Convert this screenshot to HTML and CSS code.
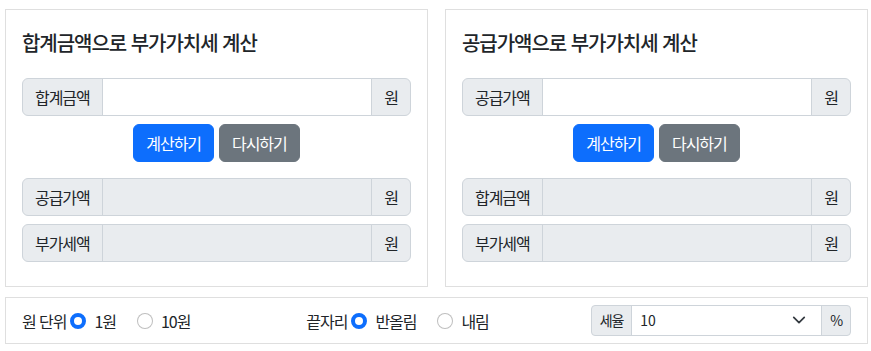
FILE: index.html
```html
<!DOCTYPE html>
<html lang="ko">
<head>
	<meta charset="UTF-8">
	<title>부가가치세 계산기</title>
	<link rel="stylesheet" href="styles.css">
</head>
<body>
	<div class="wrap">
		<div class="cards">
			<div class="card">
				<h5 class="title">합계금액으로 부가가치세 계산</h5>
				<div class="igroup">
					<span class="addon">합계금액</span>
					<input class="field" type="text">
					<span class="addon">원</span>
				</div>
				<div class="btns">
					<button class="btn primary">계산하기</button>
					<button class="btn secondary">다시하기</button>
				</div>
				<div class="igroup">
					<span class="addon">공급가액</span>
					<input class="field" type="text" disabled>
					<span class="addon">원</span>
				</div>
				<div class="igroup">
					<span class="addon">부가세액</span>
					<input class="field" type="text" disabled>
					<span class="addon">원</span>
				</div>
			</div>

			<div class="card">
				<h5 class="title">공급가액으로 부가가치세 계산</h5>
				<div class="igroup">
					<span class="addon">공급가액</span>
					<input class="field" type="text">
					<span class="addon">원</span>
				</div>
				<div class="btns">
					<button class="btn primary">계산하기</button>
					<button class="btn secondary">다시하기</button>
				</div>
				<div class="igroup">
					<span class="addon">합계금액</span>
					<input class="field" type="text" disabled>
					<span class="addon">원</span>
				</div>
				<div class="igroup">
					<span class="addon">부가세액</span>
					<input class="field" type="text" disabled>
					<span class="addon">원</span>
				</div>
			</div>
		</div>

		<div class="card options">
			<div class="opt">
				<span class="opt-name">원 단위</span>
				<label class="check"><input type="radio" name="unit" checked> 1원</label>
				<label class="check"><input type="radio" name="unit"> 10원</label>
			</div>
			<div class="opt">
				<span class="opt-name">끝자리</span>
				<label class="check"><input type="radio" name="round" checked> 반올림</label>
				<label class="check"><input type="radio" name="round"> 내림</label>
			</div>
			<div class="opt">
				<div class="igroup sm">
					<span class="addon">세율</span>
					<div class="sel">
						<select>
							<option>10</option>
							<option>0</option>
						</select>
						<svg class="chev" width="16" height="16" viewBox="0 0 16 16"><path d="M2 5l6 6 6-6" fill="none" stroke="#343a40" stroke-width="2" stroke-linecap="round" stroke-linejoin="round"/></svg>
					</div>
					<span class="addon">%</span>
				</div>
			</div>
		</div>
	</div>
</body>
</html>
```

FILE: styles.css
```css
* {
	box-sizing: border-box;
}
body {
	margin: 0;
	font-family: "Noto Sans CJK KR", "Noto Sans", sans-serif;
	font-size: 16px;
	line-height: 1.5;
	letter-spacing: -0.065em;
	color: #212529;
	background: #fff;
}
.wrap {
	padding: 9px 3px 0 5px;
}
.cards {
	display: grid;
	grid-template-columns: 1fr 1fr;
	gap: 17px;
}
.card {
	border: 1px solid #dfdfdf;
	padding: 16px 16px 16px;
}
.title {
	margin: 5px 0 23px;
	font-size: 20px;
	font-weight: 500;
	line-height: 1.2;
}
/* input group */
.igroup {
	display: flex;
	margin-bottom: 8px;
}
.igroup .addon {
	display: flex;
	align-items: center;
	padding: 6px 12px;
	background: #e9ecef;
	border: 1px solid #ced4da;
	white-space: nowrap;
}
.igroup .addon:first-child {
	border-radius: 6px 0 0 6px;
}
.igroup .addon:last-child {
	border-radius: 0 6px 6px 0;
}
.field {
	flex: 1;
	min-width: 0;
	height: 38px;
	margin: 0 -1px;
	padding: 6px 12px;
	font: inherit;
	border: 1px solid #ced4da;
	background: #fff;
	color: #212529;
}
.field:disabled {
	background: #e9ecef;
}
.btns {
	display: flex;
	justify-content: center;
	gap: 5px;
	margin-bottom: 16px;
}
.btn {
	height: 38px;
	padding: 6px 12px;
	font: inherit;
	letter-spacing: inherit;
	color: #fff;
	border: 1px solid transparent;
	border-radius: 6px;
	cursor: pointer;
}
.primary {
	background: #0d6efd;
	border-color: #0d6efd;
}
.secondary {
	background: #6c757d;
	border-color: #6c757d;
}
/* options bar */
.options {
	display: grid;
	grid-template-columns: 1fr 1fr 1fr;
	gap: 24px;
	margin-top: 10px;
	padding: 7px 16px;
}
.opt {
	display: flex;
	align-items: center;
}
.opt-name {
	margin-right: 4px;
}
.check {
	display: flex;
	align-items: center;
	gap: 8px;
	margin-right: 21px;
}
.check input {
	appearance: none;
	width: 16px;
	height: 16px;
	margin: 0;
	border: 1px solid rgba(0, 0, 0, .25);
	border-radius: 50%;
	background: #fff;
}
.check input:checked {
	border: 4px solid #0d6efd;
	background: #fff;
}
.igroup.sm {
	width: 100%;
	margin: 0;
	font-size: 14px;
}
.igroup.sm .addon {
	padding: 4px 8px;
	line-height: 21px;
}
.igroup.sm .addon:first-child {
	border-radius: 4px 0 0 4px;
}
.igroup.sm .addon:last-child {
	border-radius: 0 4px 4px 0;
}
.sel {
	flex: 1;
	position: relative;
	margin: 0 -1px;
}
.sel select {
	appearance: none;
	width: 100%;
	height: 31px;
	padding: 4px 32px 4px 8px;
	font: inherit;
	font-size: 14px;
	letter-spacing: 0;
	color: #212529;
	border: 1px solid #ced4da;
	background: #fff;
}
.chev {
	position: absolute;
	right: 16px;
	top: 8px;
	width: 14px;
	height: 14px;
	pointer-events: none;
}
```
